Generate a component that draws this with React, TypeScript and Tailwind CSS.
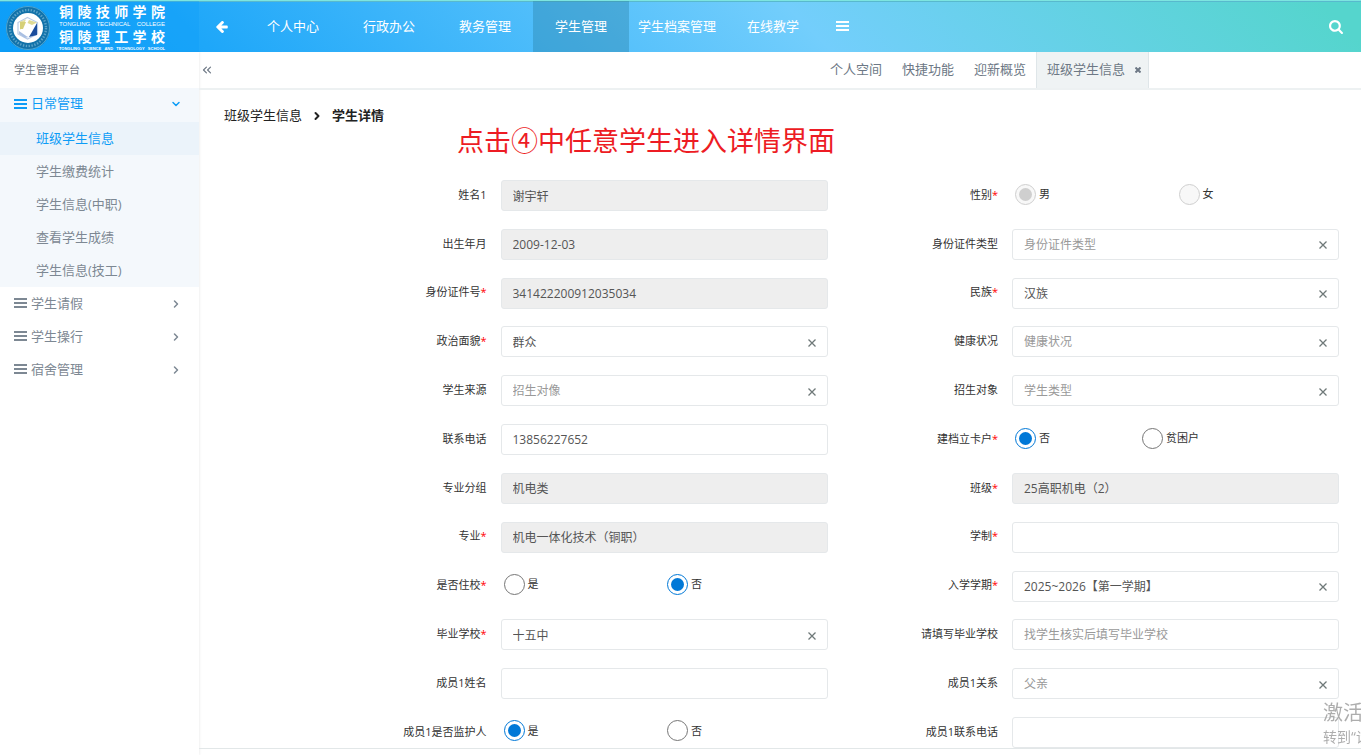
import { useState } from "react";
import { ChevronDown, ChevronRight, ChevronsLeft } from "lucide-react";

type Field = {
  id: string;
  label: string;
  required?: boolean;
  value?: string;
  placeholder?: string;
  disabled?: boolean;
  clearable?: boolean;
  options?: string[];
  narrow?: boolean;
};

const navItems = ["个人中心", "行政办公", "教务管理", "学生管理", "学生档案管理", "在线教学"];

const subMenu = ["班级学生信息", "学生缴费统计", "学生信息(中职)", "查看学生成绩", "学生信息(技工)"];

const closedMenus = ["学生请假", "学生操行", "宿舍管理"];

const tabs = ["个人空间", "快捷功能", "迎新概览"];

// listed row by row, left column first
const fields: Field[] = [
  { id: "name", label: "姓名1", value: "谢宇轩", disabled: true },
  { id: "gender", label: "性别", required: true, options: ["男", "女"], value: "男", disabled: true },
  { id: "birthday", label: "出生年月", value: "2009-12-03", disabled: true },
  { id: "idType", label: "身份证件类型", placeholder: "身份证件类型", clearable: true },
  { id: "idNumber", label: "身份证件号", required: true, value: "341422200912035034", disabled: true },
  { id: "nation", label: "民族", required: true, value: "汉族", clearable: true },
  { id: "politics", label: "政治面貌", required: true, value: "群众", clearable: true },
  { id: "health", label: "健康状况", placeholder: "健康状况", clearable: true },
  { id: "source", label: "学生来源", placeholder: "招生对像", clearable: true },
  { id: "target", label: "招生对象", placeholder: "学生类型", clearable: true },
  { id: "phone", label: "联系电话", value: "13856227652" },
  { id: "poverty", label: "建档立卡户", required: true, options: ["否", "贫困户"], value: "否", narrow: true },
  { id: "majorGroup", label: "专业分组", value: "机电类", disabled: true },
  { id: "class", label: "班级", required: true, value: "25高职机电（2）", disabled: true },
  { id: "major", label: "专业", required: true, value: "机电一体化技术（铜职）", disabled: true },
  { id: "years", label: "学制", required: true },
  { id: "boarding", label: "是否住校", required: true, options: ["是", "否"], value: "否" },
  { id: "term", label: "入学学期", required: true, value: "2025~2026【第一学期】", clearable: true },
  { id: "school", label: "毕业学校", required: true, value: "十五中", clearable: true },
  { id: "schoolText", label: "请填写毕业学校", placeholder: "找学生核实后填写毕业学校" },
  { id: "m1Name", label: "成员1姓名" },
  { id: "m1Relation", label: "成员1关系", placeholder: "父亲", clearable: true },
  { id: "m1Guardian", label: "成员1是否监护人", options: ["是", "否"], value: "是" },
  { id: "m1Phone", label: "成员1联系电话" },
];

function BarsIcon() {
  return (
    <svg
      width="13"
      height="11"
      viewBox="0 0 13 11"
      fill="currentColor"
      shapeRendering="crispEdges"
      className="shrink-0"
      aria-hidden="true"
    >
      <rect x="0" y="0" width="13" height="2" />
      <rect x="0" y="4" width="13" height="2" />
      <rect x="0" y="8" width="13" height="2" />
    </svg>
  );
}

function SchoolBadge() {
  return (
    <svg width="46" height="46" viewBox="0 0 46 46" className="shrink-0" aria-hidden="true">
      <circle cx="23" cy="23" r="22" fill="#1272a9" />
      <circle cx="23" cy="23" r="21.5" fill="none" stroke="#5fb4dc" strokeWidth="0.8" />
      <circle cx="23" cy="23" r="18" fill="none" stroke="#8cc3de" strokeWidth="2.4" strokeDasharray="1.4 1.5" opacity="0.6" />
      <circle cx="23" cy="23" r="15" fill="#fff" />
      <path d="M22.5 12.5 L32.5 17.5 V29 L22.5 34 L13 29 V17.5 Z" fill="none" stroke="#b9cbe6" strokeWidth="1.2" />
      <path d="M15 16.5 L21 14.5 L19 19 L15.5 25 Z" fill="#e2dea0" />
      <path d="M15 17 H21 L18 24 H15 Z" fill="#d6d078" />
      <path d="M24 15 L32 17.5 L27 20 L22.5 18 Z" fill="#dfda94" />
      <path d="M32 18 V30 L24 32 Z" fill="#1c4d9c" />
      <path d="M14 26 L22 31.5 L24 32 L20 33 L14 29 Z" fill="#a9bfe2" />
    </svg>
  );
}

function Spread({ parts, className }: { parts: string[]; className: string }) {
  return (
    <div className={`flex justify-between ${className}`}>
      {parts.map((part, i) => (
        <span key={i}>{part}</span>
      ))}
    </div>
  );
}

function Header() {
  return (
    <header className="flex h-[52px] shrink-0 items-stretch border-t border-[#7de5e0] bg-[linear-gradient(45deg,#0d9ff8_0%,#1ea7f9_15%,#73cefc_59%,#55d5cd_97%)] text-[13px] text-white shadow-[inset_0_1px_0_#58b9cd]">
      <a href="#home" className="flex w-[199px] shrink-0 items-center gap-2 bg-[#0a9df7]/30 pt-[2px] pl-[5px]">
        <SchoolBadge />
        <div className="w-[106px]">
          <Spread parts={[..."铜陵技师学院"]} className="text-[14px] leading-[16px] font-bold" />
          <Spread
            parts={["TONGLING", "TECHNICAL", "COLLEGE"]}
            className="font-['Liberation_Sans'] text-[6px] leading-[8px]"
          />
          <Spread parts={[..."铜陵理工学校"]} className="text-[14px] leading-[18px] font-bold" />
          <Spread
            parts={["TONGLING", "SCIENCE", "AND", "TECHNOLOGY", "SCHOOL"]}
            className="font-['Liberation_Sans'] text-[4px] leading-[6px] font-bold"
          />
        </div>
      </a>
      <button type="button" aria-label="返回" className="flex w-[46px] shrink-0 items-center pl-[17px]">
        <svg width="12" height="12" viewBox="0 32 1472 1536" fill="currentColor">
          <path d="M1472 736v128q0 53-32.5 90.5t-84.5 37.5h-704l293 294q38 36 38 90t-38 90l-75 76q-37 37-90 37-52 0-91-37l-651-652q-37-37-37-90 0-52 37-91l651-650q38-38 91-38 52 0 90 38l75 74q38 38 38 91t-38 91l-293 293h704q52 0 84.5 37.5t32.5 90.5z" />
        </svg>
      </button>
      <nav className="flex">
        {navItems.map((item) => (
          <a
            key={item}
            href="#nav"
            className={`flex w-24 items-center justify-center whitespace-nowrap ${
              item === "学生管理" ? "bg-[#247c9f]/35" : ""
            }`}
          >
            {item}
          </a>
        ))}
      </nav>
      <button type="button" aria-label="更多" className="flex w-[42px] items-center justify-center">
        <BarsIcon />
      </button>
      <button type="button" aria-label="搜索" className="ml-auto flex items-center px-[18px]">
        <svg width="14" height="14" viewBox="0 0 1664 1664" fill="currentColor">
          <path d="M1152 704q0-185-131.5-316.5t-316.5-131.5-316.5 131.5-131.5 316.5 131.5 316.5 316.5 131.5 316.5-131.5 131.5-316.5zm512 832q0 52-38 90t-90 38q-54 0-90-38l-343-342q-179 124-399 124-143 0-273.5-55.5t-225-150-150-225-55.5-273.5 55.5-273.5 150-225 225-150 273.5-55.5 273.5 55.5 225 150 150 225 55.5 273.5q0 220-124 399l343 343q37 37 37 90z" />
        </svg>
      </button>
    </header>
  );
}

function Sidebar() {
  return (
    <aside className="w-[199px] shrink-0 text-[13px] text-[#7d8893] shadow-[1px_0_2px_rgba(0,0,0,0.06)]">
      <div className="flex h-9 items-center pl-[14px] text-[11px] text-[#6b7683]">学生管理平台</div>
      <div className="bg-[#f4f8fc]">
        <button type="button" className="flex h-[34px] w-full items-center gap-1 pr-[17px] pb-[2px] pl-[14px] text-[#0d9cf6]">
          <BarsIcon />
          日常管理
          <ChevronDown size={12} strokeWidth={3} className="ml-auto" />
        </button>
        {subMenu.map((item, i) => (
          <a
            key={item}
            href="#menu"
            className={`flex h-[33px] items-center pl-9 ${i === 0 ? "bg-[#ebf3fa] text-[#0d9cf6]" : ""}`}
          >
            {item}
          </a>
        ))}
      </div>
      {closedMenus.map((item) => (
        <button key={item} type="button" className="flex h-[33px] w-full items-center gap-1 pr-[17px] pl-[14px]">
          <BarsIcon />
          {item}
          <ChevronRight size={12} strokeWidth={3} className="ml-auto" />
        </button>
      ))}
    </aside>
  );
}

function TabBar() {
  return (
    <div className="flex h-[38px] shrink-0 border-b-2 border-[#edf1f2] pr-[212px] text-[13px] text-[#6d7885]">
      <button type="button" aria-label="收起菜单" className="w-4 pl-px">
        <ChevronsLeft size={14} strokeWidth={2} />
      </button>
      <div className="ml-auto flex">
        {tabs.map((tab) => (
          <a key={tab} href="#tab" className="flex items-center px-[10px]">
            {tab}
          </a>
        ))}
        <div className="flex items-center gap-[10px] border-x border-[#dfe6e9] bg-[#eff3f4] pr-[7px] pl-[10px]">
          <a href="#tab">班级学生信息</a>
          <button type="button" aria-label="关闭">
            <svg width="6" height="6" viewBox="0 0 6 6" stroke="currentColor" strokeWidth="2">
              <path d="M0.5 0.5 L5.5 5.5 M5.5 0.5 L0.5 5.5" />
            </svg>
          </button>
        </div>
      </div>
    </div>
  );
}

function LabelText({ field }: { field: Field }) {
  return (
    <>
      {field.label}
      {field.required && <span className="text-[#f00]">*</span>}
    </>
  );
}

function RadioField({ field }: { field: Field }) {
  const [selected, setSelected] = useState(field.value);

  return (
    <div role="radiogroup" aria-labelledby={`${field.id}-label`} className="flex flex-1 pb-[3px]">
      {field.options?.map((option) => (
        <label
          key={option}
          className={`flex items-center gap-[3px] pl-[3px] text-[11px] ${field.narrow ? "w-[127px]" : "w-1/2"}`}
        >
          <input
            type="radio"
            name={field.id}
            checked={selected === option}
            disabled={field.disabled}
            onChange={() => setSelected(option)}
            className="flex size-[21px] shrink-0 appearance-none items-center justify-center rounded-full border border-[#767676] bg-white before:size-[13px] before:rounded-full checked:border-[#0078d7] checked:before:bg-[#0078d7] disabled:border-[#cfcfcf] disabled:bg-[#f8f8f8] disabled:checked:before:bg-[#cfcfcf]"
          />
          {option}
        </label>
      ))}
    </div>
  );
}

function TextField({ field }: { field: Field }) {
  const [value, setValue] = useState(field.value ?? "");

  return (
    <div
      className={`flex h-[31px] flex-1 items-center rounded-[3px] border border-[#e5e8ea] ${
        field.disabled ? "bg-[#eee]" : "bg-white"
      }`}
    >
      <input
        id={field.id}
        type="text"
        value={value}
        placeholder={field.placeholder}
        disabled={field.disabled}
        onChange={(e) => setValue(e.target.value)}
        className="h-full w-full min-w-0 bg-transparent pl-[11px] text-[12px] text-[#555] outline-none placeholder:text-[#999]"
      />
      {field.clearable && (
        <button type="button" aria-label="清除" onClick={() => setValue("")} className="px-[11px] pt-[2px] text-[#6f7979]">
          <svg width="8" height="8" viewBox="0 0 8 8" stroke="currentColor" strokeWidth="1.3">
            <path d="M0.5 0.5 L7.5 7.5 M7.5 0.5 L0.5 7.5" />
          </svg>
        </button>
      )}
    </div>
  );
}

function FormRow({ field }: { field: Field }) {
  return (
    <div className="flex h-[31px] items-center">
      {field.options ? (
        <span id={`${field.id}-label`} className="mr-[14px] w-1/3 pb-px text-right text-[11px] whitespace-nowrap">
          <LabelText field={field} />
        </span>
      ) : (
        <label htmlFor={field.id} className="mr-[14px] w-1/3 pb-px text-right text-[11px] whitespace-nowrap">
          <LabelText field={field} />
        </label>
      )}
      {field.options ? <RadioField field={field} /> : <TextField field={field} />}
    </div>
  );
}

export default function App() {
  return (
    <div className="flex min-h-screen flex-col bg-white font-['Open_Sans','Noto_Sans_CJK_SC',sans-serif] text-[#333]">
      <Header />
      <div className="flex flex-1">
        <Sidebar />
        <div className="flex min-w-0 flex-1 flex-col">
          <TabBar />
          <main className="mb-[6px] flex flex-1 flex-col border-b border-[#e2e7e8] pt-[14px]">
            <div className="flex h-6 items-center pl-[25px] text-[13px] text-[#222]">
              <a href="#class">班级学生信息</a>
              <ChevronRight size={12} strokeWidth={4} className="mx-[9px]" />
              <strong>学生详情</strong>
            </div>
            <p className="pl-[258px] text-[27px] leading-[26px] text-[#ed1c24]">点击④中任意学生进入详情界面</p>
            <form className="mt-[26px] grid flex-1 grid-cols-2 content-between pr-[22px] pl-[117px]">
              {fields.map((field) => (
                <FormRow key={field.id} field={field} />
              ))}
            </form>
          </main>
        </div>
      </div>
      <div className="pointer-events-none fixed right-0 bottom-[7px] w-[38px] overflow-hidden whitespace-nowrap text-[#999]/80">
        <div className="text-[20px] leading-[26px]">激活</div>
        <div className="text-[14px] leading-[22px]">转到“设</div>
      </div>
    </div>
  );
}
